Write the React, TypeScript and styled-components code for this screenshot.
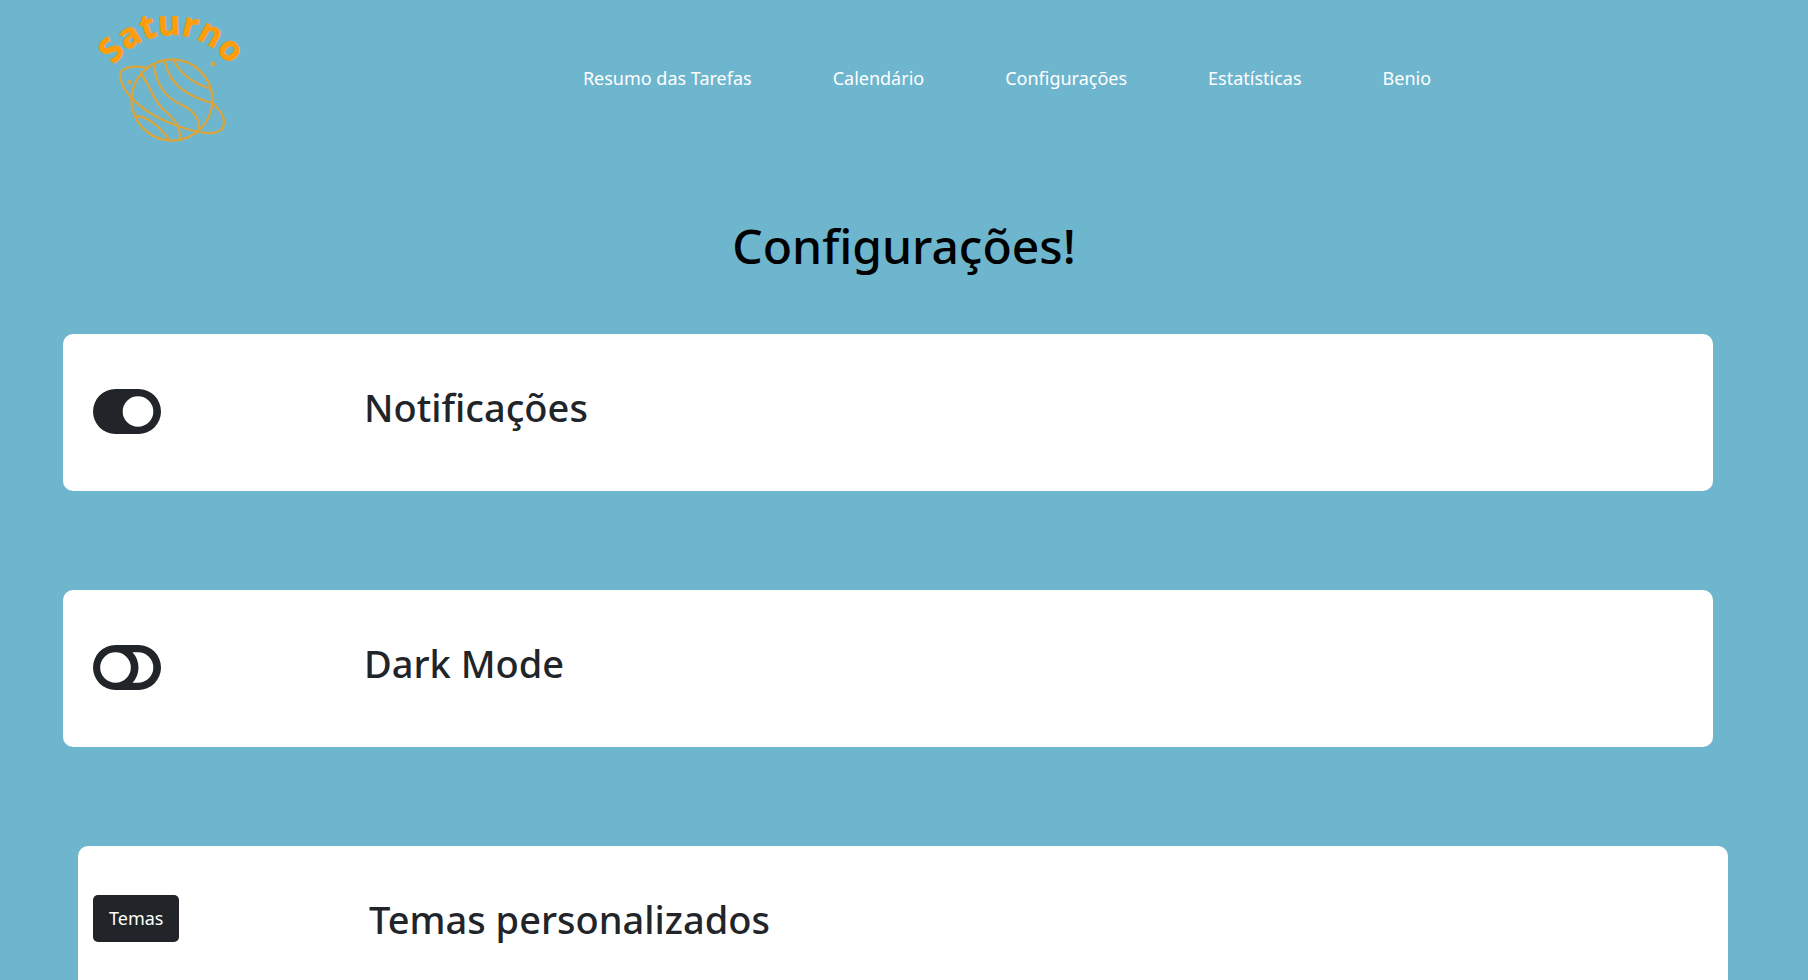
import { useId, useState } from "react";
import type { ReactNode } from "react";
import styled, { createGlobalStyle } from "styled-components";

const GlobalStyle = createGlobalStyle`
  * { box-sizing: border-box; }
  body {
    margin: 0;
    background: #6eb5ce;
    color: #212529;
    font-family: "Segoe UI", "Noto Sans", "Open Sans", sans-serif;
    font-size: 18px;
    line-height: 30px;
    overflow-x: hidden;
  }
`;

const Header = styled.header`
  display: grid;
  grid-template-columns: 1fr auto 1fr;
  align-items: center;
  padding: 0 80px;
  height: 156px;
`;

const Brand = styled.a`
  display: block;
  width: 180px;
  height: 156px;
`;

const Menu = styled.ul`
  display: flex;
  gap: 81px;
  margin: 0 0 0 206px;
  padding: 0;
  list-style: none;
`;

const MenuLink = styled.a`
  color: #fff;
  text-decoration: none;
`;

const Title = styled.h1`
  margin: 60px 0 58px;
  color: #000;
  font-size: 48px;
  font-weight: 500;
  line-height: 60px;
  text-align: center;
`;

const List = styled.main`
  display: flex;
  flex-direction: column;
  gap: 99px;
  padding: 0 95px 99px 63px;
`;

const Card = styled.section<{ $shifted?: boolean }>`
  display: grid;
  grid-template-columns: ${(p) => (p.$shifted ? "276px" : "271px")} 1fr;
  align-items: center;
  height: 157px;
  padding: 0 ${(p) => (p.$shifted ? "15px" : "30px")};
  margin: 0 ${(p) => (p.$shifted ? "-15px 0 15px" : "0")};
  border-radius: 10px;
  background: #fff;
`;

const CardTitle = styled.h2`
  margin: 0 0 12px;
  font-size: 38px;
  font-weight: 500;
  line-height: 48px;
`;

const Switch = styled.span`
  position: relative;
  display: block;
  width: 68px;
  height: 45px;
  margin-bottom: 2px;
`;

const SwitchInput = styled.input`
  position: absolute;
  inset: 0;
  width: 100%;
  height: 100%;
  margin: 0;
  opacity: 0;
  cursor: pointer;
`;

const SwitchIcon = styled.svg`
  display: block;
  width: 100%;
  height: 100%;
  fill: currentColor;
`;

const ThemeButton = styled.button`
  justify-self: start;
  margin-bottom: 12px;
  padding: 8px 16px;
  border: 0;
  border-radius: 5px;
  background: #212529;
  color: #fff;
  font: inherit;
  line-height: 31px;
`;

const links = ["Resumo das Tarefas", "Calendário", "Configurações", "Estatísticas", "Benio"];

function Logo() {
  return (
    <svg width="180" height="156" viewBox="0 0 180 156" role="img" aria-label="Saturno">
      <path id="logo-arc" d="M21.7 105 A70 70 0 0 1 161.7 105" fill="none" />
      <text fontFamily="'Open Sans', sans-serif" fontWeight="700" fontSize="34" fill="#ff9d0a" stroke="#ff9d0a" strokeWidth="0.8" textAnchor="middle">
        <textPath href="#logo-arc" startOffset="50%">Saturno</textPath>
      </text>
      <g fill="none" stroke="#d9a53c" strokeWidth="2.3" strokeLinecap="round">
        <circle cx="92" cy="100" r="40.5" />
        <path d="M66 67.5C48 65 37 68 41 81C45 95 65 115 98 126C125 136 144 136 144 122C144 116 140 110 133 103" />
        <path d="M62 75C72 89 72 99 84 110C94 119 101 126 100 139" />
        <path d="M74 65C76 84 85 97 100 104C114 110 119 118 119 128" />
        <path d="M85 62C90 86 108 96 132 103" />
        <path d="M94 61C102 75 115 84 129 88" />
        <path d="M57 116C71 118 80 128 89 139" />
      </g>
      <circle cx="49.5" cy="82" r="2" fill="#d9a53c" />
      <circle cx="133" cy="64" r="2.4" fill="#d9a53c" />
    </svg>
  );
}

function Toggle({ id, initial }: { id: string; initial: boolean }) {
  const [on, setOn] = useState(initial);
  return (
    <Switch>
      <SwitchIcon viewBox="0 0 68 45" aria-hidden="true">
        <path
          fillRule="evenodd"
          d={
            on
              ? "M22.5 0H45.5A22.5 22.5 0 0 1 45.5 45H22.5A22.5 22.5 0 0 1 22.5 0ZM45 7.2A15.3 15.3 0 1 0 45 37.8A15.3 15.3 0 1 0 45 7.2Z"
              : "M22.5 0H45.5A22.5 22.5 0 0 1 45.5 45H22.5A22.5 22.5 0 0 1 22.5 0ZM22.5 7.2A15.3 15.3 0 1 0 22.5 37.8A15.3 15.3 0 1 0 22.5 7.2ZM39.5 7.2A22.5 22.5 0 0 1 39.5 37.8H45A15.3 15.3 0 0 0 45 7.2Z"
          }
        />
      </SwitchIcon>
      <SwitchInput id={id} type="checkbox" role="switch" checked={on} onChange={(e) => setOn(e.target.checked)} />
    </Switch>
  );
}

function ToggleCard({ children, initial }: { children: ReactNode; initial: boolean }) {
  const id = useId();
  return (
    <Card>
      <Toggle id={id} initial={initial} />
      <CardTitle>
        <label htmlFor={id}>{children}</label>
      </CardTitle>
    </Card>
  );
}

export default function App() {
  return (
    <>
      <GlobalStyle />
      <Header>
        <Brand href="#">
          <Logo />
        </Brand>
        <nav>
          <Menu>
            {links.map((name) => (
              <li key={name}>
                <MenuLink href="#">{name}</MenuLink>
              </li>
            ))}
          </Menu>
        </nav>
      </Header>
      <Title>Configurações!</Title>
      <List>
        <ToggleCard initial>Notificações</ToggleCard>
        <ToggleCard initial={false}>Dark Mode</ToggleCard>
        <Card $shifted>
          <ThemeButton type="button">Temas</ThemeButton>
          <CardTitle>Temas personalizados</CardTitle>
        </Card>
      </List>
    </>
  );
}
